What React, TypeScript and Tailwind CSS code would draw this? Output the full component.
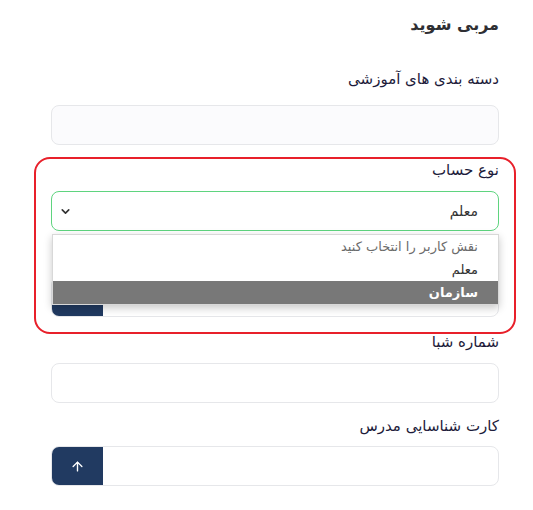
import { ArrowUp, ChevronDown } from "lucide-react";

const font = { fontFamily: '"DejaVu Sans", sans-serif' };

const Label = ({ children }: { children: string }) => (
  <label className="block text-[15px] leading-[22px] text-[#1d1b3a]">{children}</label>
);

const TextField = ({ tint = false }: { tint?: boolean }) => (
  <div
    className={`h-10 w-full rounded-lg border border-[#e6e7ea] ${tint ? "bg-[#fbfbfd]" : "bg-white"}`}
  />
);

const FileField = () => (
  <div className="flex h-10 w-full flex-row-reverse overflow-hidden rounded-lg border border-[#e6e7ea] bg-white">
    <div className="flex h-full w-[51px] items-center justify-center bg-[#213a61] text-white">
      <ArrowUp size={15} strokeWidth={2.2} />
    </div>
  </div>
);

export default function App() {
  return (
    <div dir="rtl" style={font} className="relative min-h-[510px] w-[533px] bg-white pl-[51px] pr-[34px]">
      <div className="w-full pt-[13px]">
        <h1 className="text-[16px] font-bold leading-[24px] text-[#2f2f33]">مربی شوید</h1>

        <div className="mt-[31px]">
          <Label>دسته بندی های آموزشی</Label>
          <div className="mt-[15px]">
            <TextField tint />
          </div>
        </div>

        <div className="mt-[14px]">
          <Label>نوع حساب</Label>
          <div className="relative mt-[10px]">
            <div className="flex h-10 w-full items-center justify-between rounded-lg border border-[#5fd47f] bg-white pl-[7px] pr-[20px]">
              <span className="text-[14px] text-[#333]">معلم</span>
              <ChevronDown size={13} strokeWidth={3} className="text-[#333]" />
            </div>
            <ul className="absolute left-[1px] right-0 top-[43px] z-10 border border-[#d8d8d8] bg-white text-[13px] leading-[23px] shadow-[0_3px_8px_rgba(0,0,0,0.22)]">
              <li className="pr-[20px] text-[#6b6b6b]">نقش کاربر را انتخاب کنید</li>
              <li className="pr-[20px] text-[#333]">معلم</li>
              <li className="bg-[#787878] pr-[20px] font-bold text-white">سازمان</li>
            </ul>
          </div>
        </div>

        {/* field hidden behind the open list */}
        <div className="mt-[14px]">
          <div className="h-[22px]" />
          <div className="mt-[10px]">
            <FileField />
          </div>
        </div>

        <div className="mt-[14px]">
          <Label>شماره شبا</Label>
          <div className="mt-[10px]">
            <TextField />
          </div>
        </div>

        <div className="mt-[12px]">
          <Label>کارت شناسایی مدرس</Label>
          <div className="mt-[9px]">
            <FileField />
          </div>
        </div>
      </div>

      <div className="pointer-events-none absolute left-[34px] top-[157px] h-[177px] w-[482px] rounded-[16px] border-[2.5px] border-[#e8202a]" />
    </div>
  );
}
